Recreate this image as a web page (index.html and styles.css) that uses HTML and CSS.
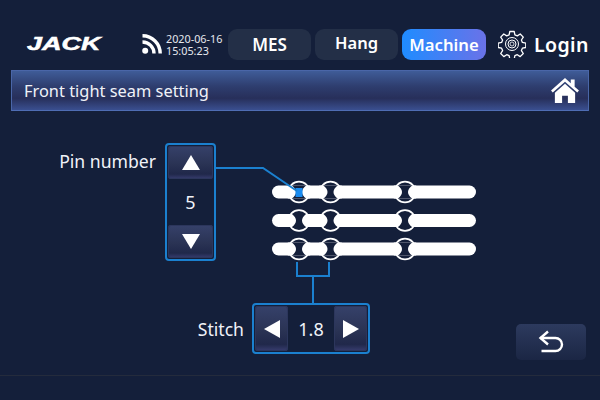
FILE: index.html
```
<!DOCTYPE html>
<html lang="en">
<head>
<meta charset="utf-8">
<title>Front tight seam setting</title>
<link rel="stylesheet" href="styles.css">
</head>
<body>
<div class="screen">
  <header class="topbar">
    <div class="logo">JACK</div>
    <svg class="wifi" viewBox="0 0 20 20"><circle cx="3.2" cy="16.8" r="3" fill="#fff"/><path d="M0.500 8a11.500 11.500 0 0 1 11.500 11.500" fill="none" stroke="#fff" stroke-width="3.400"/><path d="M0.500 1.800a17.700 17.700 0 0 1 17.700 17.700" fill="none" stroke="#fff" stroke-width="3.400"/></svg>
    <div class="clock"><span>2020-06-16</span><span>15:05:23</span></div>
    <nav class="tabs">
      <div class="tab">MES</div>
      <div class="tab tab-hang">Hang</div>
      <div class="tab active">Machine</div>
    </nav>
    <div class="login">
      <svg class="gear" viewBox="0 0 28 28" fill="none" stroke="#fff"><path stroke-width="1.300" stroke-linejoin="round" d="M11.800 1.500h4.400l.7 3.400 2.400 1 2.900-1.900 3.100 3.100-1.900 2.900 1 2.400 3.400.7v4.400l-3.400.7-1 2.400 1.900 2.900-3.100 3.100-2.900-1.900-2.400 1-.7 3.400h-4.400l-.7-3.400-2.400-1-2.900 1.900-3.100-3.100 1.900-2.900-1-2.400-3.400-.7v-4.400l3.400-.7 1-2.400-1.900-2.900 3.100-3.100 2.900 1.900 2.400-1z"/><circle cx="14" cy="14" r="6.500" stroke-width="1"/><circle cx="14" cy="14" r="4" stroke-width="1"/><circle cx="14" cy="14" r="2" stroke-width=".8"/></svg>
      <span>Login</span>
    </div>
  </header>
  <div class="titlebar">
    <span>Front tight seam setting</span>
    <svg class="home" viewBox="0 0 30 28"><path fill="#fff" d="M15 1 0.500 14l1.800 2L15 4.800 27.700 16l1.800-2-4.500-4V2.500h-4V6.400z"/><path fill="#fff" d="M15 7 4.500 16.300V27h7.500v-7.500h6V27h7.500V16.300z"/></svg>
  </div>
  <main class="stage">
    <svg class="diagram" viewBox="0 0 600 264">
      <defs>
        <g id="ring">
          <circle r="11.200" fill="#fff"/>
          <circle r="9.500" fill="#141f3a"/>
          <rect x="-11.200" y="-6.500" width="22.400" height="13" fill="#fff"/>
          <path d="M-7-6.500Q1 0-7 6.500H7Q-1 0 7-6.500z" fill="#141f3a"/>
        </g>
        <g id="seam">
          <rect x="272" y="-6.500" width="204" height="13" rx="6.500" fill="#fff"/>
          <use href="#ring" x="299"/>
          <use href="#ring" x="330.500"/>
          <use href="#ring" x="405"/>
        </g>
      </defs>
      <use href="#seam" y="81"/>
      <use href="#seam" y="109.500"/>
      <use href="#seam" y="138"/>
      <rect x="295.500" y="77" width="7" height="9" fill="#1a8cf0"/>
      <g fill="none" stroke="#1b80cf" stroke-width="2">
        <path d="M216 57h47l34 23"/>
        <path d="M297 151v14h32v-14M313 165v27"/>
      </g>
    </svg>
    <div class="label pin-label">Pin number</div>
    <div class="stepper vertical">
      <div class="key"><span class="tri up"></span></div>
      <div class="value">5</div>
      <div class="key"><span class="tri down"></span></div>
    </div>
    <div class="label stitch-label">Stitch</div>
    <div class="stepper horizontal">
      <div class="key"><span class="tri left"></span></div>
      <div class="value">1.8</div>
      <div class="key"><span class="tri right"></span></div>
    </div>
    <div class="back">
      <svg viewBox="0 0 26 24" fill="none" stroke="#fff" stroke-width="2.400"><path d="M2 8h15.500a6.500 6.500 0 0 1 0 13H3.500"/><path d="M10 1.500 2.500 8l7.500 6.500"/></svg>
    </div>
  </main>
  <div class="footer-line"></div>
</div>
</body>
</html>
```
FILE: styles.css
```
* { box-sizing: border-box; }
html, body { margin: 0; padding: 0; }
body { width: 600px; height: 400px; overflow: hidden; background: #141f3a; font-family: "Noto Sans", "Open Sans", sans-serif; color: #fff; }
.screen { width: 600px; height: 400px; display: flex; flex-direction: column; position: relative; }
.topbar { height: 70px; display: flex; align-items: center; padding: 18px 11px 0 27px; flex: none; }
.logo { width: 74px; font-family: "Liberation Sans", sans-serif; font-weight: 700; font-style: italic; font-size: 18px; line-height: 18px; -webkit-text-stroke: .5px #fff; transform: scaleX(1.5); transform-origin: left; white-space: nowrap; }
.wifi { width: 20px; height: 20px; margin-left: 41px; flex: none; }
.clock { display: flex; flex-direction: column; margin-left: 4px; width: 60px; font-size: 10.800px; line-height: 12px; color: #e6e8ee; padding-top: 1px; }
.tabs { display: flex; gap: 4px; margin-left: 2px; }
.tab { width: 83px; height: 31px; border-radius: 9px; background: #232f47; display: flex; align-items: center; justify-content: center; font-size: 17px; font-weight: 600; }
.tab-hang { font-size: 16.500px; padding-bottom: 3px; }
.tab.active { width: 84px; font-size: 16.700px; background: linear-gradient(90deg, #1f8cff, #6a72e8); }
.login { display: flex; align-items: center; gap: 8px; margin-left: 12px; font-size: 19.500px; font-weight: 600; letter-spacing: .4px; white-space: nowrap; }
.gear { width: 28px; height: 28px; flex: none; }
.titlebar { margin: 0 11px; height: 41px; flex: none; display: flex; align-items: center; justify-content: space-between; padding: 0 8px 0 12px; border: 1px solid #4a66a8; border-bottom-color: #4f6db4; background: linear-gradient(180deg, #3f5c98 0%, #2e3d6e 40%, #272f5a 70%, #3a4f90 100%); font-size: 16.400px; color: #f0f2f8; }
.home { width: 30px; height: 27px; }
.stage { position: relative; flex: 1; }
.diagram { position: absolute; left: 0; top: 0; width: 600px; height: 264px; }
.label { position: absolute; font-size: 17.600px; line-height: 24px; color: #f0f2f8; }
.pin-label { right: 444px; top: 38px; }
.stitch-label { right: 356px; top: 206px; }
.stepper { position: absolute; display: flex; align-items: center; justify-content: space-between; border: 2px solid #1b80cf; border-radius: 4px; background: #141f3a; padding: 1px; }
.vertical { left: 165px; top: 32px; width: 51px; height: 118px; flex-direction: column; }
.horizontal { left: 252px; top: 192px; width: 118px; height: 51px; }
.vertical .key { width: 45px; height: 33px; }
.horizontal .key { width: 33px; height: 45px; }
.key { display: flex; align-items: center; justify-content: center; flex: none; border-radius: 3px; background: linear-gradient(180deg, #36416a 0%, #2a3354 55%, #20284a 85%, #383d70 100%); box-shadow: inset 0 0 0 1px #2c365c; }
.value { font-size: 18px; flex: 1; display: flex; align-items: center; justify-content: center; color: #f0f2f8; }
.tri { width: 0; height: 0; border-style: solid; border-color: transparent; }
.up { border-width: 0 9px 15px; border-bottom-color: #fff; }
.down { border-width: 15px 9px 0; border-top-color: #fff; }
.left { border-width: 9px 16px 9px 0; border-right-color: #fff; }
.right { border-width: 9px 0 9px 16px; border-left-color: #fff; }
.back { position: absolute; left: 516px; top: 213px; width: 70px; height: 36px; border-radius: 5px; background: linear-gradient(180deg, #2d3a5e, #1b2644); display: flex; align-items: center; justify-content: center; }
.back svg { width: 26px; height: 24px; }
.footer-line { position: absolute; left: 0; right: 0; top: 375px; height: 1px; background: #242b3c; }
```
